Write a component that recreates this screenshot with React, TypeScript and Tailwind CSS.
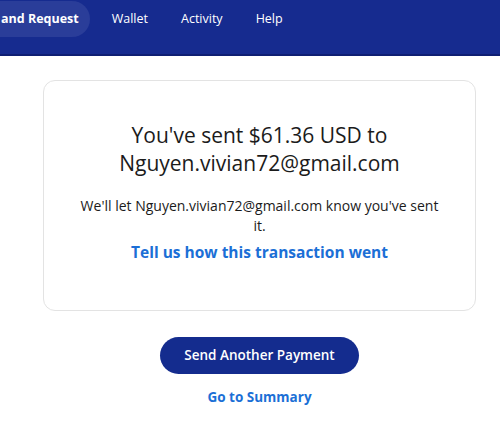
const NavItem = ({ label, active }: { label: string; active?: boolean }) => (
  <a
    className={
      active
        ? "h-[36px] flex items-center pl-[1px] pr-[11px] rounded-r-full bg-[#2a3d99] font-bold"
        : "h-[36px] flex items-center px-[11px]"
    }
  >
    {label}
  </a>
);

const App = () => {
  return (
    <div className="w-[500px] h-[426px] bg-white font-['Open_Sans',sans-serif] overflow-hidden">
      <header className="h-[56px] bg-[#162b8f] border-b-2 border-[#0f1f73] text-white text-[12.5px]">
        <nav className="flex items-start gap-[11px] pt-[1px]">
          <NavItem label="and Request" active />
          <NavItem label="Wallet" />
          <NavItem label="Activity" />
          <NavItem label="Help" />
        </nav>
      </header>

      <main className="pl-[43px] pr-[24px] pt-[24px] flex flex-col items-center">
        <section className="w-full h-[231px] border border-[#e3e3e3] rounded-[12px] flex flex-col items-center pt-[40px] px-[36px] text-center">
          <h1 className="text-[21px] leading-[28px] text-[#1b1b1b]">
            You've sent $61.36 USD to
            <br />
            Nguyen.vivian72@gmail.com
          </h1>
          <p className="mt-[19px] text-[14px] leading-[20px] text-[#1b1b1b]">
            We'll let Nguyen.vivian72@gmail.com know you've sent it.
          </p>
          <a className="mt-[5px] text-[15.5px] font-bold text-[#1b6fd6]">
            Tell us how this transaction went
          </a>
        </section>

        <button className="mt-[26px] w-[199px] h-[37px] rounded-full bg-[#142c8e] text-white text-[13.5px] font-semibold">
          Send Another Payment
        </button>
        <a className="mt-[13px] text-[13.5px] font-bold text-[#1b6fd6]">
          Go to Summary
        </a>
      </main>
    </div>
  );
};

export default App;
